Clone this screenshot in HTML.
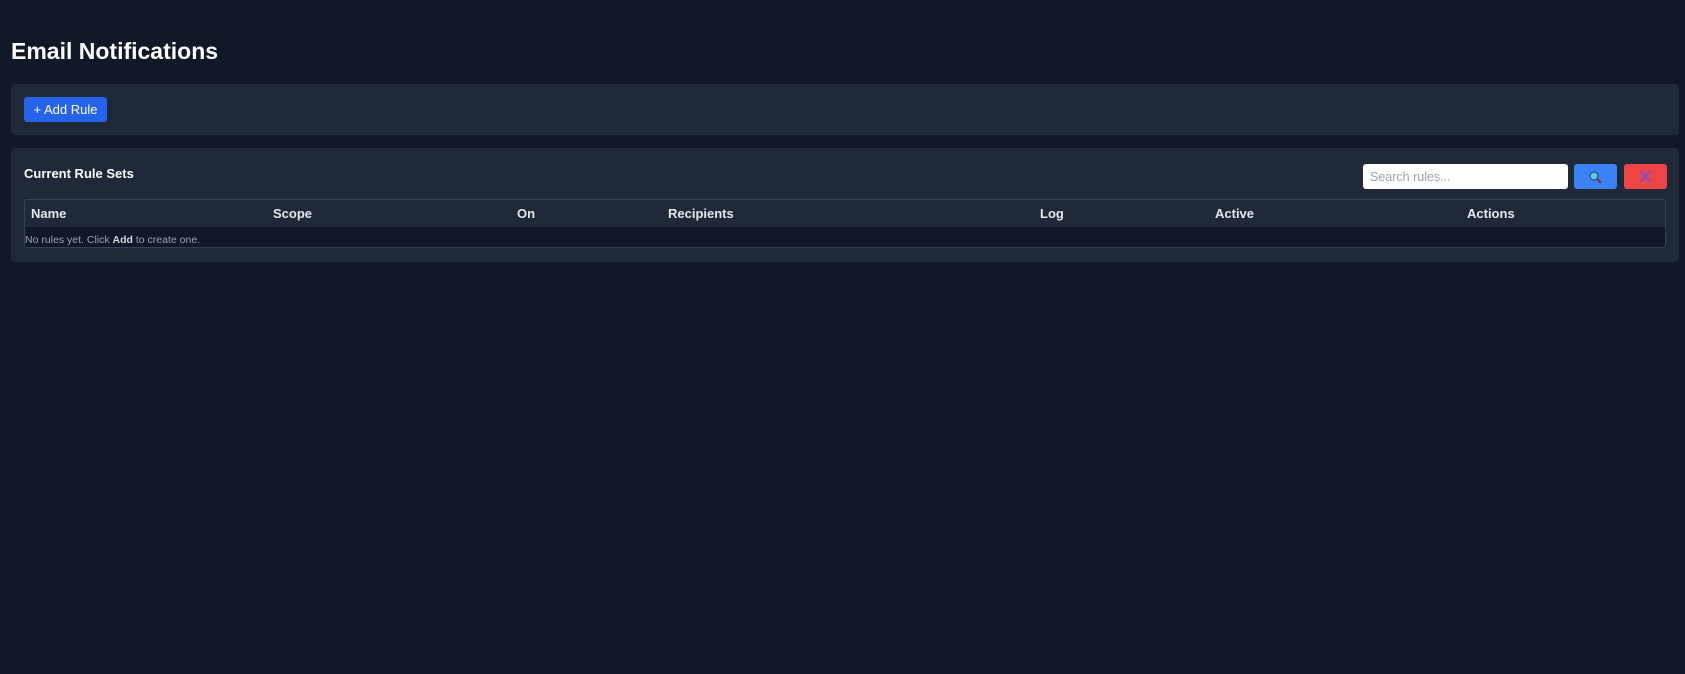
<!DOCTYPE html>
<html><head><style>
body{margin:0;background:#111827;width:1685px;height:674px;font-family:"Liberation Sans","DejaVu Sans",sans-serif;color:#fff;position:relative;overflow:hidden}
.a{position:absolute}
h1{position:absolute;left:11px;top:38px;margin:0;font-size:23px;font-weight:bold;color:#fff}
.card{position:absolute;left:11px;width:1668px;background:#1f2937;border-radius:4px}
.btn{position:absolute;border-radius:3px}
.th{position:absolute;top:206px;font-size:13px;font-weight:bold;color:#e5e7eb}
</style></head><body>
<h1>Email Notifications</h1>
<div class="card" style="top:84px;height:51px"></div>
<div class="btn" style="left:24px;top:97px;width:83px;height:25px;background:#2563eb;font-size:13px;line-height:25px;text-align:center;color:#fff">+ Add Rule</div>
<div class="card" style="top:148px;height:114px"></div>
<div class="a" style="left:24px;top:166px;font-size:13px;font-weight:bold">Current Rule Sets</div>
<div class="a" style="left:1363px;top:164px;width:205px;height:25px;background:#fff;border-radius:3px"></div>
<div class="a" style="left:1370px;top:170px;font-size:12.5px;color:#9ca3af">Search rules...</div>
<div class="btn" style="left:1574px;top:164px;width:43px;height:25px;background:#3b82f6">
<svg width="43" height="25"><circle cx="20" cy="12" r="4" fill="#67c8e0" stroke="#1e3a8a" stroke-width="1"/><line x1="23" y1="15" x2="27" y2="19" stroke="#7c2d4f" stroke-width="2"/></svg></div>
<div class="btn" style="left:1624px;top:164px;width:43px;height:25px;background:#ef4444">
<svg width="43" height="25"><path d="M16 7L27 18M27 7L16 18" stroke="#7c4dcc" stroke-width="2"/></svg></div>
<div class="a" style="left:24px;top:199px;width:1640px;height:47px;border:1px solid #374151;border-radius:3px;background:#111827;overflow:hidden">
<div style="height:27px;background:#1f2937"></div></div>
<div class="th" style="left:31px">Name</div>
<div class="th" style="left:273px">Scope</div>
<div class="th" style="left:517px">On</div>
<div class="th" style="left:668px">Recipients</div>
<div class="th" style="left:1040px">Log</div>
<div class="th" style="left:1215px">Active</div>
<div class="th" style="left:1467px">Actions</div>
<div class="a" style="left:25px;top:234px;font-size:10.5px;color:#9ca3af">No rules yet. Click <b style="color:#d1d5db">Add</b> to create one.</div>
</body></html>
